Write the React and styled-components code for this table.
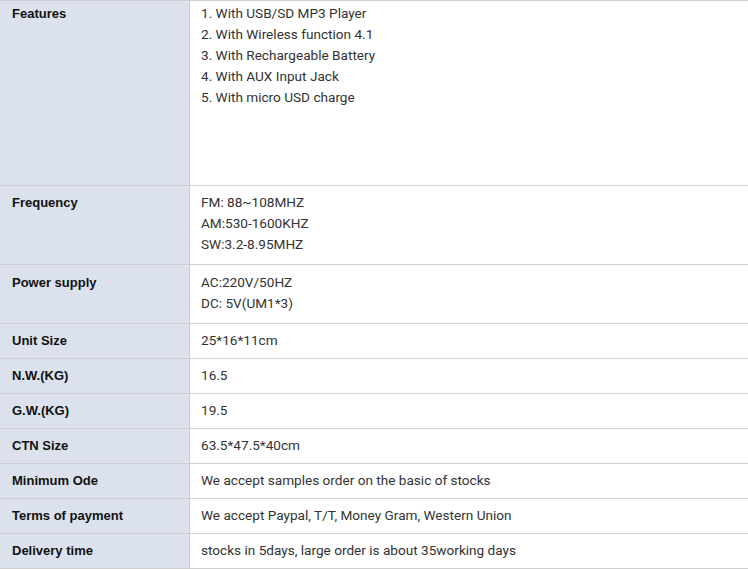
import React from 'react';
import styled, { createGlobalStyle } from 'styled-components';

const GlobalStyle = createGlobalStyle`
	html, body {
		margin: 0;
		padding: 0;
		background: #fff;
		overflow: hidden;
	}
`;

const SpecTable = styled.table`
	width: calc(100% + 4px);
	border-collapse: collapse;
	table-layout: fixed;
	border-top: 1px solid #cfcfcf;
	line-height: 21px;
`;

const Label = styled.th`
	width: 165px;
	padding: ${({ $top }) => $top}px 12px ${({ $bottom }) => $bottom}px 12px;
	background: #dbe2ed;
	border: 1px solid #cfcfcf;
	border-left: none;
	border-right: 1px solid #c9ced6;
	text-align: left;
	vertical-align: top;
	font-family: "Liberation Sans", Arial, sans-serif;
	font-size: 13px;
	font-weight: bold;
	color: #111;
`;

const Value = styled.td`
	padding: ${({ $top }) => $top}px 11px ${({ $bottom }) => $bottom}px 11px;
	height: ${({ $height }) => $height}px;
	border: 1px solid #cfcfcf;
	vertical-align: top;
	font-family: Roboto, "Liberation Sans", sans-serif;
	font-size: 13.6px;
	color: #333;
`;

const Line = styled.div`
	white-space: nowrap;
`;

const specs = [
	{ label: 'Features', top: 2, bottom: 6, height: 176, lines: [
		'1. With USB/SD MP3 Player',
		'2. With Wireless function 4.1',
		'3. With Rechargeable Battery',
		'4. With AUX Input Jack',
		'5. With micro USD charge',
	] },
	{ label: 'Frequency', top: 6, bottom: 9, height: 63, lines: ['FM: 88~108MHZ', 'AM:530-1600KHZ', 'SW:3.2-8.95MHZ'] },
	{ label: 'Power supply', top: 7, bottom: 9, height: 42, lines: ['AC:220V/50HZ', 'DC: 5V(UM1*3)'] },
	{ label: 'Unit Size', lines: ['25*16*11cm'] },
	{ label: 'N.W.(KG)', lines: ['16.5'] },
	{ label: 'G.W.(KG)', lines: ['19.5'] },
	{ label: 'CTN Size', lines: ['63.5*47.5*40cm'] },
	{ label: 'Minimum Ode', lines: ['We accept samples order on the basic of stocks'] },
	{ label: 'Terms of payment', lines: ['We accept Paypal, T/T, Money Gram, Western Union'] },
	{ label: 'Delivery time', lines: ['stocks in 5days, large order is about 35working days'] },
];

export default function App() {
	return (
		<>
			<GlobalStyle />
			<SpecTable>
				<tbody>
					{specs.map((row, key) => {
						const top = row.top ?? 6;
						const bottom = row.bottom ?? 7;
						return (
							<tr key={key}>
								<Label $top={top} $bottom={bottom}>{row.label}</Label>
								<Value $top={top} $bottom={bottom} $height={row.height ?? 21}>
									{row.lines.map((line, i) => <Line key={i}>{line}</Line>)}
								</Value>
							</tr>
						);
					})}
				</tbody>
			</SpecTable>
		</>
	);
}
